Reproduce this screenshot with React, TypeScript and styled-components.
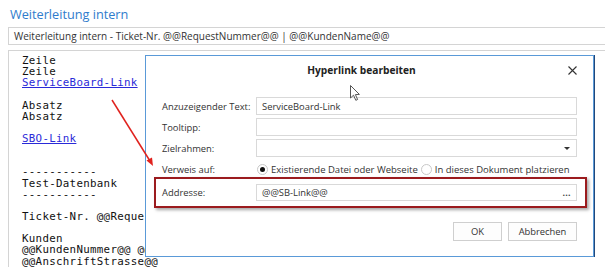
import styled, { createGlobalStyle } from "styled-components";

const GlobalStyle = createGlobalStyle`
  html, body {
    margin: 0;
    padding: 0;
    background: #ffffff;
  }
  body {
    font-family: "Open Sans", "Liberation Sans", sans-serif;
    color: #222;
  }
`;

const Page = styled.div`
  position: relative;
  width: 605px;
  height: 267px;
  overflow: hidden;
  padding-left: 8px;
  box-sizing: border-box;
`;

const Heading = styled.h1`
  margin: 0 0 0 2px;
  height: 27px;
  padding-top: 5px;
  box-sizing: border-box;
  font-size: 12.7px;
  font-weight: 400;
  line-height: 19px;
  color: #2f7ccc;
`;

const Subject = styled.div`
  height: 18px;
  margin-bottom: 5px;
  padding-left: 5px;
  border: 1px solid #d4d4d4;
  border-right: none;
  box-sizing: border-box;
  font-size: 10px;
  line-height: 16px;
  color: #333;
  white-space: nowrap;
`;

const Editor = styled.div`
  height: 230px;
  border-top: 1px solid #d4d4d4;
  border-left: 1px solid #d4d4d4;
  padding: 4px 0 0 13px;
  font-family: "DejaVu Sans Mono", "Liberation Mono", monospace;
  font-size: 10.8px;
  letter-spacing: 0.3px;
  line-height: 11.15px;
  color: #111;
  white-space: pre;
`;

const Line = styled.div`
  height: 11.15px;
`;

const Link = styled.span`
  color: #2a2ad8;
  text-decoration: underline;
`;

const Dialog = styled.div`
  position: absolute;
  left: 145px;
  top: 55px;
  width: 449px;
  height: 202px;
  box-sizing: border-box;
  background: #ffffff;
  border: 1px solid #5a9ad8;
  box-shadow: 1px 0 0 #23487a;
  display: flex;
  flex-direction: column;
  font-size: 9.4px;
  color: #333;
`;

const TitleBar = styled.div`
  display: grid;
  grid-template-columns: 1fr auto 1fr;
  align-items: center;
  height: 28px;
  padding-right: 16px;
`;

const Title = styled.div`
  grid-column: 2;
  font-weight: 700;
  font-size: 10.2px;
  color: #222;
`;

const Close = styled.div`
  justify-self: end;
  width: 9px;
  height: 9px;
  display: flex;
`;

const Form = styled.div`
  display: grid;
  grid-template-columns: 94px minmax(0, 1fr);
  row-gap: 3px;
  align-items: center;
  margin-top: 13px;
  padding: 0 16px;
`;

const Label = styled.div`
  white-space: nowrap;
`;

const Input = styled.div<{ h?: number }>`
  height: ${(p) => p.h ?? 18}px;
  border: 1px solid #d9d9d9;
  box-sizing: border-box;
  padding: 0 5px;
  display: flex;
  align-items: center;
  justify-content: space-between;
  color: #333;
`;

const Caret = styled.div`
  width: 0;
  height: 0;
  border-left: 3px solid transparent;
  border-right: 3px solid transparent;
  border-top: 3px solid #333;
  margin-right: 1px;
`;

const Dots = styled.span`
  font-size: 9px;
  font-weight: 700;
  letter-spacing: 0.3px;
  color: #444;
`;

const RadioRow = styled.div`
  display: flex;
  align-items: center;
  height: 18px;
  gap: 3px;
  padding-left: 1px;
  white-space: nowrap;
  font-size: 9.5px;
`;

const Radio = styled.span<{ checked?: boolean }>`
  flex: none;
  width: 11px;
  height: 11px;
  border-radius: 50%;
  border: 1px solid #c8c8c8;
  box-sizing: border-box;
  display: inline-flex;
  align-items: center;
  justify-content: center;
  &::after {
    content: "";
    width: 5px;
    height: 5px;
    border-radius: 50%;
    background: ${(p) => (p.checked ? "#111" : "transparent")};
  }
`;

const Highlight = styled.div`
  grid-column: 1 / -1;
  margin: -4px -10px 0 -8px;
  border: 2px solid #9b1b1e;
  box-shadow: 2px 2px 3px rgba(0, 0, 0, 0.35);
  padding: 5px 8px 5px 6px;
  display: grid;
  grid-template-columns: 94px minmax(0, 1fr);
  align-items: center;
`;

const Buttons = styled.div`
  display: flex;
  justify-content: flex-end;
  gap: 6px;
  margin-top: 14px;
  padding-right: 16px;
`;

const Button = styled.div<{ w: number }>`
  width: ${(p) => p.w}px;
  height: 19px;
  border: 1px solid #cfcfcf;
  box-sizing: border-box;
  background: #fdfdfd;
  display: flex;
  align-items: center;
  justify-content: center;
  color: #333;
`;

const Overlay = styled.svg`
  position: absolute;
  left: 0;
  top: 0;
  pointer-events: none;
`;

const lines: (string | { link: string })[] = [
  "Zeile",
  "Zeile",
  { link: "ServiceBoard-Link" },
  "",
  "Absatz",
  "Absatz",
  "",
  { link: "SBO-Link" },
  "",
  "",
  "-----------",
  "Test-Datenbank",
  "-----------",
  "",
  "Ticket-Nr. @@RequestNummer@@",
  "",
  "Kunden",
  "@@KundenNummer@@ @@KundenName@@",
  "@@AnschriftStrasse@@",
];

export default function App() {
  return (
    <>
      <GlobalStyle />
      <Page>
        <Heading>Weiterleitung intern</Heading>
        <Subject>
          Weiterleitung intern - Ticket-Nr. @@RequestNummer@@ | @@KundenName@@
        </Subject>
        <Editor>
          {lines.map((l, i) => (
            <Line key={i}>
              {typeof l === "string" ? l : <Link>{l.link}</Link>}
            </Line>
          ))}
        </Editor>

        <Dialog>
          <TitleBar>
            <Title>Hyperlink bearbeiten</Title>
            <Close>
              <svg width="9" height="9" viewBox="0 0 9 9">
                <path d="M0.5 0.5 L8.5 8.5 M8.5 0.5 L0.5 8.5" stroke="#333" strokeWidth="1.1" />
              </svg>
            </Close>
          </TitleBar>
          <Form>
            <Label>Anzuzeigender Text:</Label>
            <Input>ServiceBoard-Link</Input>
            <Label>Tooltipp:</Label>
            <Input />
            <Label>Zielrahmen:</Label>
            <Input>
              <span />
              <Caret />
            </Input>
            <Label>Verweis auf:</Label>
            <RadioRow>
              <Radio checked />
              Existierende Datei oder Webseite
              <Radio />
              In dieses Dokument platzieren
            </RadioRow>
            <Highlight>
              <Label>Addresse:</Label>
              <Input h={17}>
                @@SB-Link@@
                <Dots>...</Dots>
              </Input>
            </Highlight>
          </Form>
          <Buttons>
            <Button w={49}>OK</Button>
            <Button w={69}>Abbrechen</Button>
          </Buttons>
        </Dialog>

        <Overlay width="605" height="267" viewBox="0 0 605 267">
          <line x1="112" y1="100" x2="150" y2="161" stroke="#e0221e" strokeWidth="1.5" />
          <path d="M153 166 L146.5 160.5 L152 157.5 Z" fill="#e0221e" />
          <path
            d="M350.5 85.5 L350.5 98 L353.5 95.2 L355.8 100.3 L357.6 99.5 L355.4 94.6 L359.4 94.4 Z"
            fill="#fff"
            stroke="#444"
            strokeWidth="0.9"
            strokeLinejoin="round"
          />
        </Overlay>
      </Page>
    </>
  );
}
